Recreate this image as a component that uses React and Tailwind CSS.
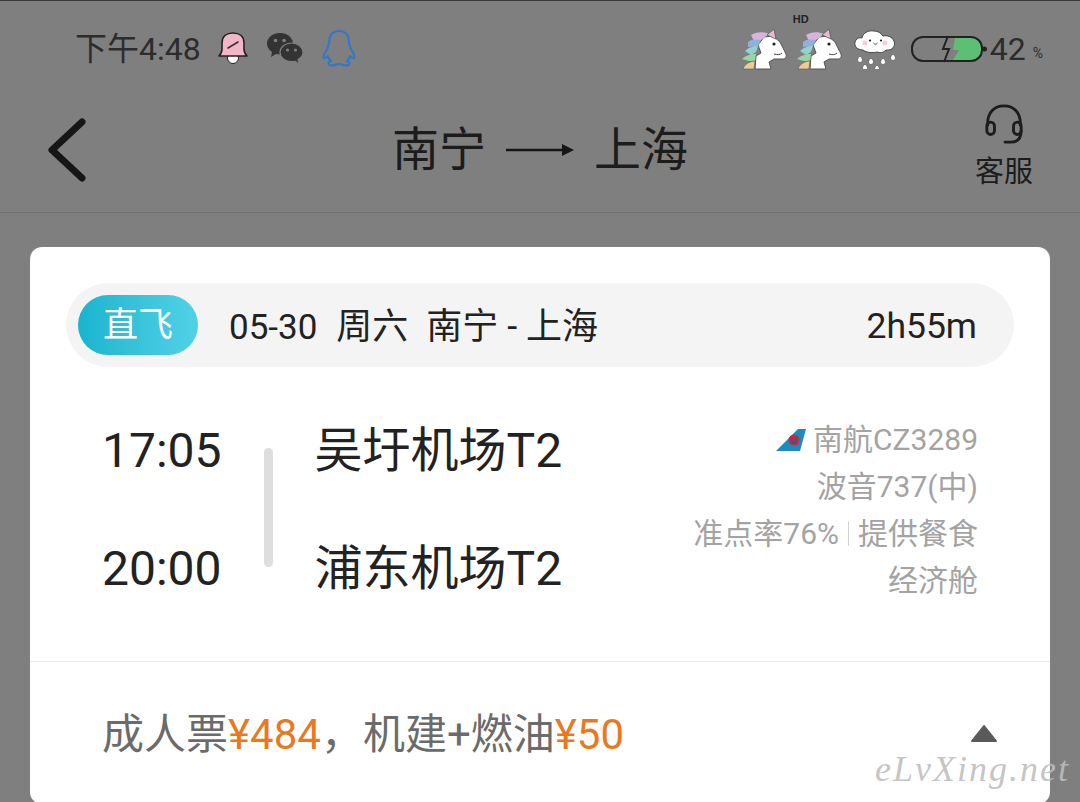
import React from 'react'

const FONT = "font-['Roboto','Noto_Sans_CJK_SC',sans-serif]"

function Bell() {
  return (
    <svg width="30" height="36" viewBox="0 0 30 36">
      <circle cx="15" cy="28" r="5.500" fill="#fff" stroke="#222" strokeWidth="1" />
      <path d="M4 19V13C4 6 9 3 15 3s11 3 11 10v6c0 3 1 5 3 7H1c2-2 3-4 3-7z" fill="#f2b6c6" stroke="#222" strokeWidth="1.600" strokeLinejoin="round" />
      <path d="M10 18l10-6" stroke="#333" strokeWidth="1.600" strokeLinecap="round" />
    </svg>
  )
}

function WeChat() {
  return (
    <svg width="38" height="32" viewBox="0 0 38 32">
      <path d="M14 1C6.800 1 1 5.800 1 11.600c0 3.400 1.900 6.300 5 8.300L5 25l5-3c1.300.3 2.600.5 4 .5C21.200 22.500 27 17.400 27 11.600 27 5.800 21.200 1 14 1z" fill="#333" />
      <path d="M25.500 11C19.100 11 14 15.200 14 20.300s5.100 9.300 11.500 9.300c1.100 0 2.200-.1 3.200-.4L33 32l-1-4.500c3-1.700 5-4.300 5-7.200C37 15.200 31.900 11 25.500 11z" fill="#333" stroke="#7f7f7f" strokeWidth="1.200" />
      <circle cx="9.500" cy="8.500" r="1.800" fill="#7f7f7f" />
      <circle cx="18" cy="8.500" r="1.800" fill="#7f7f7f" />
      <circle cx="21.500" cy="18" r="1.600" fill="#7f7f7f" />
      <circle cx="29.500" cy="18" r="1.600" fill="#7f7f7f" />
    </svg>
  )
}

function Penguin() {
  return (
    <svg width="34" height="38" viewBox="0 0 34 38" fill="none" stroke="#3377cc" strokeWidth="2.200" strokeLinejoin="round">
      <path d="M17 2C10 2 7 7 7 13c0 3-1 5-3 9-2 3-3 6-2 7 1 .6 3-1 4-2 .4 2 1.400 4 3 5-2 1-3 2-2 3.500 1.500 1.500 6 1 8.500-.5h3c2.500 1.500 7 2 8.500.5 1-1.500 0-2.500-2-3.500 1.600-1 2.600-3 3-5 1 1 3 2.600 4 2 1-1 0-4-2-7-2-4-3-6-3-9 0-6-3-11-10-11z" />
    </svg>
  )
}

function Unicorn({ hd }) {
  return (
    <div className="relative w-[48px] h-[42px]">
      {hd && (
        <span className="absolute left-[-3px] top-[-15px] text-[11px] leading-[12px] font-bold text-[#222] font-['Liberation_Sans',sans-serif]">HD</span>
      )}
      <svg width="48" height="42" viewBox="0 0 48 42">
        <path d="M14 41l1-13 5-3-3-8 6-8 9-1 7 6 6 12c1 3-1 5-3 5h-9l-5 3 2 7z" fill="#fff" stroke="#555" strokeWidth="1" strokeLinejoin="round" />
        <path d="M10 7c4-3 12-4 18-1l-8 6-7 1z" fill="#d9b3dd" />
        <path d="M26 7l7-6 2 10z" fill="#eab8d3" stroke="#555" strokeWidth=".8" />
        <path d="M7 14c3-3 7-3 13-2l-3 6-10 1z" fill="#8fb2dd" />
        <path d="M4 23c3-3 7-5 13-5l-2 6-5 3z" fill="#93d3cf" />
        <path d="M1 31c3-3 8-5 14-5l-1 7-6 0z" fill="#97d5a5" />
        <path d="M2 41c1-4 6-8 12-8l-1 8z" fill="#eccb95" stroke="#555" strokeWidth=".6" />
        <circle cx="33" cy="16" r="1.600" fill="#222" />
        <path d="M33 26c3 1 6 1 8-1" fill="none" stroke="#444" strokeWidth="1" />
      </svg>
    </div>
  )
}

function Cloud() {
  return (
    <svg width="44" height="40" viewBox="0 0 44 40">
      <path d="M9 21C3 21 0 17 1 13c1-3 4-5 7-4 1-5 6-8 12-7 4 0 7 2 9 5 5-1 9 1 11 5 2 5-2 10-8 9-3 3-6 3-9 2-4 1-10 1-14-2z" fill="#fff" stroke="#444" strokeWidth="1" />
      <circle cx="11" cy="14" r="2.500" fill="#f1cfd4" />
      <circle cx="31" cy="14" r="2.500" fill="#f1cfd4" />
      <circle cx="16" cy="11.500" r="1.100" fill="#222" />
      <circle cx="27" cy="11.500" r="1.100" fill="#222" />
      <path d="M19.500 14c1 1.500 3 1.500 4 0" fill="none" stroke="#333" strokeWidth=".9" />
      {[[6, 27], [17, 29], [29, 29], [39, 25], [11, 35], [23, 36]].map(([x, y]) => (
        <path key={`${x}-${y}`} d={`M${x} ${y}c2 2 2.500 3 2.500 4a2.500 2.500 0 0 1-5 0c0-1 .5-2 2.500-4z`} fill="#fff" stroke="#444" strokeWidth=".6" />
      ))}
    </svg>
  )
}

function Battery() {
  return (
    <svg width="76" height="30" viewBox="0 0 76 30">
      <path d="M44 4h17a10 10 0 0 1 0 22H42l6-10h-6z" fill="#5cbf74" />
      <rect x="1" y="3" width="70" height="24" rx="11" fill="none" stroke="#222" strokeWidth="2" />
      <path d="M37 2l-5 13h6l-5 13" fill="none" stroke="#222" strokeWidth="2" />
      <circle cx="73.500" cy="15" r="2.500" fill="#222" />
    </svg>
  )
}

function Headset() {
  return (
    <svg width="42" height="40" viewBox="0 0 42 42" fill="none" stroke="#1c1c1c" strokeWidth="3" strokeLinecap="round">
      <path d="M4 22C3 9 11 2 21 2s18 7 17 20" />
      <rect x="3" y="19" width="8" height="13" rx="4" />
      <rect x="31" y="19" width="8" height="13" rx="4" />
      <path d="M39 28c0 8-4 12-11 12h-6" />
    </svg>
  )
}

function TailLogo() {
  return (
    <svg width="30" height="24" viewBox="0 0 30 24">
      <path d="M0 23L22 1h8l-6 22z" fill="#1c8bc4" />
      <circle cx="18" cy="12" r="5.500" fill="#c92b3c" />
      <path d="M16 9v4a2 2 0 0 0 4 0V9" fill="none" stroke="#1c5f98" strokeWidth="1.200" />
    </svg>
  )
}

export default function App() {
  return (
    <div className={`relative w-[1080px] h-[802px] overflow-hidden bg-[#7f7f7f] border-t border-[#3a3a3a] ${FONT}`}>
      {/* status bar */}
      <div className="flex items-center justify-between h-[95px] pl-[75px] pr-[37px] text-[#2c2c2c]">
        <div className="flex items-center">
          <span className="text-[32px] leading-none">下午4:48</span>
          <div className="ml-[17px] flex items-center gap-[18px] mt-[-2px]">
            <Bell />
            <WeChat />
            <Penguin />
          </div>
        </div>
        <div className="flex items-center">
          <div className="flex items-center gap-[7px]">
            <Unicorn />
            <Unicorn hd />
            <div className="ml-[3px]"><Cloud /></div>
          </div>
          <div className="ml-[13px]"><Battery /></div>
          <span className="ml-[3px] text-[32px] leading-none">42</span>
          <span className="ml-[7px] mt-[8px] text-[14px] leading-none">%</span>
        </div>
      </div>

      {/* nav */}
      <div className="flex items-center justify-between h-[117px] border-b border-[#727272] pl-[46px] pr-[46px] text-[#1c1c1c]">
        <svg className="mt-[-9px]" width="42" height="66" viewBox="0 0 42 66" fill="none" stroke="#161616" strokeWidth="7" strokeLinecap="round" strokeLinejoin="round">
          <path d="M36 5L6 33l30 28" />
        </svg>
        <div className="flex items-center text-[47px] leading-none ml-[18px] mt-[-10px]">
          <span>南宁</span>
          <svg className="mx-[20px] mt-[2px]" width="68" height="12" viewBox="0 0 68 12">
            <path d="M0 6h56" stroke="#161616" strokeWidth="2.500" />
            <path d="M56 0l12 6-12 6z" fill="#161616" />
          </svg>
          <span>上海</span>
        </div>
        <div className="flex flex-col items-center mt-[-16px] w-[60px]">
          <Headset />
          <span className="mt-[11px] text-[29px] leading-[34px]">客服</span>
        </div>
      </div>

      {/* ticket card */}
      <div className="mx-[30px] mt-[34px] rounded-[12px] bg-white">
        <div className="pt-[36px] px-[36px]">
          <div className="flex items-center justify-between h-[84px] rounded-full bg-[#f4f4f4] pl-[12px] pr-[37px] text-[#222]">
            <div className="flex items-center">
              <span className="flex items-center justify-center w-[120px] h-[60px] rounded-full bg-gradient-to-r from-[#17b4d0] to-[#50d2e6] text-white text-[35px] leading-none">直飞</span>
              <span className="ml-[31px] mt-[4px] text-[35px] leading-none">05-30</span>
              <span className="ml-[19px] mt-[4px] text-[36px] leading-none whitespace-pre">周六  南宁 - 上海</span>
            </div>
            <span className="mt-[4px] text-[35.5px] leading-none">2h55m</span>
          </div>
        </div>

        <div className="flex justify-between h-[294px] pl-[72px] pr-[72px]">
          <div className="flex">
            <div className="flex flex-col pt-[60px] gap-[70px] text-[48px] leading-[48px] text-[#222]">
              <span>17:05</span>
              <span>20:00</span>
            </div>
            <div className="ml-[42px] mt-[81px] w-[9px] h-[119px] rounded-full bg-[#dedede]" />
            <div className="ml-[42px] flex flex-col pt-[60px] gap-[70px] text-[48px] leading-[48px] text-[#222]">
              <span>吴圩机场T2</span>
              <span>浦东机场T2</span>
            </div>
          </div>
          <div className="flex flex-col items-end pt-[49px] text-[30px] leading-[47px] text-[#a3a3a3]">
            <div className="flex items-center">
              <TailLogo />
              <span className="ml-[7px]">南航CZ3289</span>
            </div>
            <span>波音737(中)</span>
            <div className="flex items-center">
              <span>准点率76%</span>
              <span className="mx-[9px] w-px h-[24px] bg-[#d0d0d0]" />
              <span>提供餐食</span>
            </div>
            <span>经济舱</span>
          </div>
        </div>

        <div className="flex items-center justify-between h-[143px] border-t border-[#e8e8e8] pl-[72px] pr-[52px] pt-[3px] text-[42px] leading-none text-[#6b6b6b]">
          <div>
            成人票<span className="text-[#e8791f]">¥484</span>，机建+燃油<span className="text-[#e8791f]">¥50</span>
          </div>
          <svg width="28" height="18" viewBox="0 0 28 18" className="mt-[-3px]">
            <path d="M14 2L26 17H2z" fill="#5a5a5a" stroke="#5a5a5a" strokeWidth="2" strokeLinejoin="round" />
          </svg>
        </div>
      </div>

      {/* watermark */}
      <span className="absolute left-[875px] top-[746px] text-[36px] leading-[44px] italic tracking-[2px] text-[#bdbdbd]/90 font-['Liberation_Serif',serif] whitespace-nowrap">eLvXing.net</span>
    </div>
  )
}
